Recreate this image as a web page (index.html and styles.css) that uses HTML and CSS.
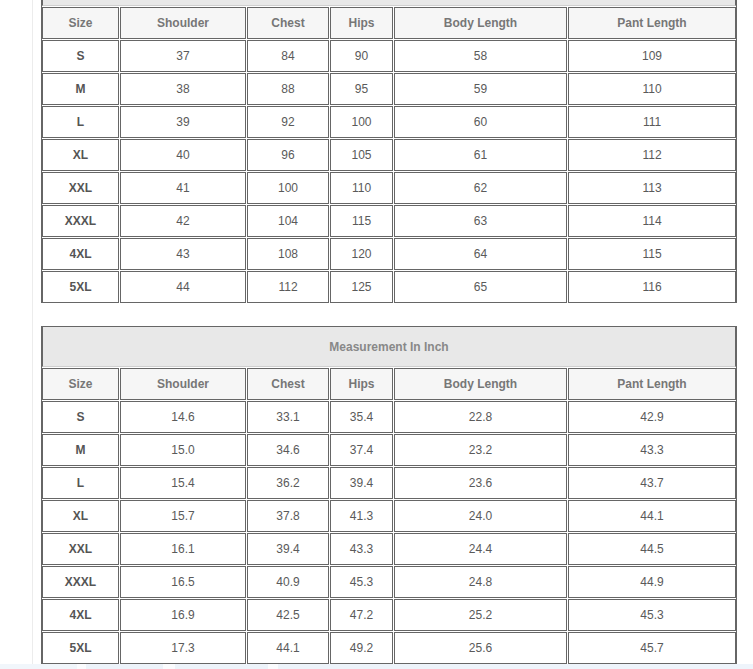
FILE: index.html
```html
<!DOCTYPE html>
<html>
<head>
<meta charset="utf-8">
<link rel="stylesheet" href="styles.css">
</head>
<body>
<div class="page">
  <div class="sheet">
    <div class="chart chart-first">
      <table class="size-table">
        <colgroup><col class="c1"><col class="c2"><col class="c3"><col class="c4"><col class="c5"><col class="c6"></colgroup>
        <tr><td class="title" colspan="6">Measurement In Cm</td></tr>
        <tr class="head"><th>Size</th><th>Shoulder</th><th>Chest</th><th>Hips</th><th>Body Length</th><th>Pant Length</th></tr>
        <tr><th>S</th><td>37</td><td>84</td><td>90</td><td>58</td><td>109</td></tr>
        <tr><th>M</th><td>38</td><td>88</td><td>95</td><td>59</td><td>110</td></tr>
        <tr><th>L</th><td>39</td><td>92</td><td>100</td><td>60</td><td>111</td></tr>
        <tr><th>XL</th><td>40</td><td>96</td><td>105</td><td>61</td><td>112</td></tr>
        <tr><th>XXL</th><td>41</td><td>100</td><td>110</td><td>62</td><td>113</td></tr>
        <tr><th>XXXL</th><td>42</td><td>104</td><td>115</td><td>63</td><td>114</td></tr>
        <tr><th>4XL</th><td>43</td><td>108</td><td>120</td><td>64</td><td>115</td></tr>
        <tr><th>5XL</th><td>44</td><td>112</td><td>125</td><td>65</td><td>116</td></tr>
      </table>
    </div>
    <div class="chart">
      <table class="size-table">
        <colgroup><col class="c1"><col class="c2"><col class="c3"><col class="c4"><col class="c5"><col class="c6"></colgroup>
        <tr><td class="title" colspan="6">Measurement In Inch</td></tr>
        <tr class="head"><th>Size</th><th>Shoulder</th><th>Chest</th><th>Hips</th><th>Body Length</th><th>Pant Length</th></tr>
        <tr><th>S</th><td>14.6</td><td>33.1</td><td>35.4</td><td>22.8</td><td>42.9</td></tr>
        <tr><th>M</th><td>15.0</td><td>34.6</td><td>37.4</td><td>23.2</td><td>43.3</td></tr>
        <tr><th>L</th><td>15.4</td><td>36.2</td><td>39.4</td><td>23.6</td><td>43.7</td></tr>
        <tr><th>XL</th><td>15.7</td><td>37.8</td><td>41.3</td><td>24.0</td><td>44.1</td></tr>
        <tr><th>XXL</th><td>16.1</td><td>39.4</td><td>43.3</td><td>24.4</td><td>44.5</td></tr>
        <tr><th>XXXL</th><td>16.5</td><td>40.9</td><td>45.3</td><td>24.8</td><td>44.9</td></tr>
        <tr><th>4XL</th><td>16.9</td><td>42.5</td><td>47.2</td><td>25.2</td><td>45.3</td></tr>
        <tr><th>5XL</th><td>17.3</td><td>44.1</td><td>49.2</td><td>25.6</td><td>45.7</td></tr>
      </table>
    </div>
  </div>
  <div class="strip">
    <span class="seg s1"></span><span class="seg s2"></span><span class="seg s3"></span><span class="seg s4"></span><span class="seg s5"></span><span class="seg s6"></span><span class="seg s7"></span><span class="seg s8"></span>
  </div>
</div>
</body>
</html>
```

FILE: styles.css
```css
html, body {
  margin: 0;
  padding: 0;
  background: #fff;
  overflow: hidden;
}

body {
  font-family: "Liberation Sans", Arial, sans-serif;
  font-size: 12px;
  color: #555;
}

.page {
  width: 753px;
  height: 669px;
  overflow: hidden;
  display: flex;
  flex-direction: column;
}

.sheet {
  margin-left: 32px;
  width: 711px;
  border-left: 1px solid #ececec;
  border-right: 1px solid #ececec;
  padding: 0 7px 0 8px;
  margin-top: -35px;
  display: flex;
  flex-direction: column;
  gap: 23px;
  flex: none;
  box-sizing: content-box;
}

.chart {
  width: 694px;
  border-left: 1px solid #666;
  border-right: 1px solid #666;
  overflow: hidden;
}

.size-table {
  width: 696px;
  margin: -1px;
  table-layout: fixed;
  border-collapse: separate;
  border-spacing: 1px;
  background: #fff;
}

.c1 { width: 77px; }
.c2 { width: 126px; }
.c3 { width: 82px; }
.c4 { width: 63px; }
.c5 { width: 173px; }
.c6 { width: 168px; }

.size-table td,
.size-table th {
  border: 1px solid #666;
  height: 30px;
  padding: 0;
  text-align: center;
  vertical-align: middle;
  box-sizing: border-box;
}

.size-table tr > * {
  height: 32px;
}

.size-table td {
  font-weight: normal;
  color: #5a5a5a;
}

.size-table th {
  font-weight: bold;
  color: #555;
}

.size-table .head th {
  background: #f6f6f6;
  color: #777;
}

.size-table td.title {
  height: 41px;
  background: #e8e8e8;
  color: #888;
  font-weight: bold;
  border-bottom-color: #cfcfcf;
}

.strip {
  margin-top: 0;
  height: 6px;
  display: flex;
  gap: 0;
  flex: none;
}

.seg {
  display: block;
  height: 100%;
  background: #edf3fa;
}

.s1 { width: 77px; background: #f1f6fb; }
.s2 { width: 9px; background: #fbfcfe; }
.s3 { width: 77px; }
.s4 { width: 12px; background: #fbfcfe; }
.s5 { width: 93px; }
.s6 { width: 10px; background: #fbfcfe; }
.s7 { width: 182px; }
.s8 { width: 293px; background: #eef4fb; }
```
